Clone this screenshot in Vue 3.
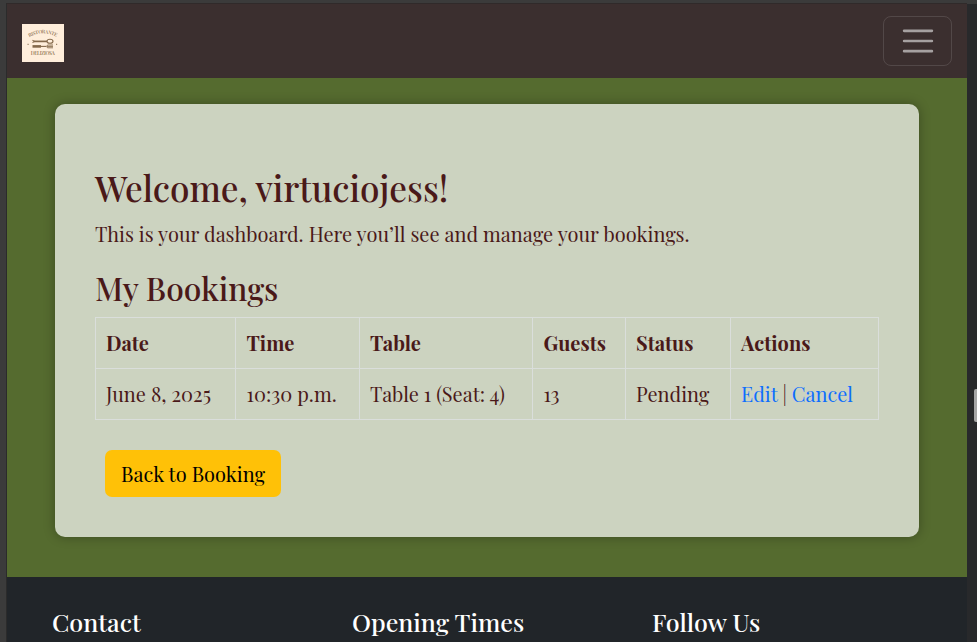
<script setup>
const columns = ['Date', 'Time', 'Table', 'Guests', 'Status', 'Actions']
const booking = ['June 8, 2025', '10:30 p.m.', 'Table 1 (Seat: 4)', '13', 'Pending']
const footer = ['Contact', 'Opening Times', 'Follow Us']
</script>

<template>
  <div class="frame">
    <div class="page">
      <nav class="navbar">
        <svg class="logo" viewBox="0 0 42 38" width="42" height="38">
          <rect width="42" height="38" fill="#ffeedb" />
          <path id="logo-arc" d="M7.2 13.4 Q20.8 5.4 35 13.4" fill="none" />
          <text class="logo-text"><textPath href="#logo-arc" textLength="28.5">RISTORANTE</textPath></text>
          <g fill="none" stroke="#84694b" stroke-width="1.1">
            <path d="M12 17.4H25" stroke-width="1.7" />
            <path d="M10.5 16.2l2 1.2-2 1.2" />
            <ellipse cx="28" cy="17.2" rx="3" ry="2" />
            <path d="M10.5 22.4H19" stroke-width="2.6" />
            <path d="M19 22.4H24" />
            <path d="M31 21H25.5q-1.8 1.4 0 2.8H31M25 22.4H31" stroke-width=".9" />
          </g>
          <path d="M5.5 20.3h1.2M34 20.3h1.2" stroke="#84694b" />
          <text class="logo-text" x="8.8" y="31.4" textLength="24">DELIZIOSA</text>
        </svg>
        <button class="toggler" aria-label="Toggle navigation">
          <svg viewBox="0 0 30 30" width="38" height="38">
            <path d="M4 7h22M4 15h22M4 23h22" stroke="rgba(255,255,255,.55)" stroke-width="2" stroke-linecap="round" />
          </svg>
        </button>
      </nav>

      <main>
        <section class="card">
          <h1>Welcome, virtuciojess!</h1>
          <p>This is your dashboard. Here you’ll see and manage your bookings.</p>
          <h2>My Bookings</h2>
          <table>
            <colgroup>
              <col class="c-date" /><col class="c-time" /><col class="c-seat" />
              <col class="c-guests" /><col class="c-status" /><col />
            </colgroup>
            <thead>
              <tr><th v-for="c in columns" :key="c">{{ c }}</th></tr>
            </thead>
            <tbody>
              <tr>
                <td v-for="b in booking" :key="b">{{ b }}</td>
                <td><a>Edit</a> <span>|</span> <a>Cancel</a></td>
              </tr>
            </tbody>
          </table>
          <button class="back">Back to Booking</button>
        </section>
      </main>

      <footer>
        <h3 v-for="f in footer" :key="f">{{ f }}</h3>
      </footer>
    </div>
    <aside class="rail"><span class="thumb"></span></aside>
  </div>
</template>

<style>
body { overflow: hidden; background: #3a3a3a; }
</style>

<style scoped>
.frame {
  box-sizing: border-box;
  display: flex;
  width: 977px;
  height: 642px;
  padding: 3px 0 0 6px;
  overflow: hidden;
  background: #3b3b3b;
  font-family: "Playfair Display", "Liberation Serif", serif;
}
.page {
  box-sizing: border-box;
  display: flex;
  flex-direction: column;
  width: 961px;
  border-left: 1px solid #2b2b2b;
  border-top: 1px solid #302a2a;
}
.navbar {
  box-sizing: border-box;
  display: flex;
  flex: none;
  justify-content: space-between;
  align-items: flex-start;
  height: 74px;
  padding: 12px 15px 0;
  background: #3b2f2f;
}
.logo { display: block; margin-top: 8px; }
.logo-text { font-size: 5px; font-weight: 600; fill: #967b5c; }
.toggler {
  box-sizing: border-box;
  display: flex;
  justify-content: center;
  align-items: center;
  width: 69px;
  height: 50px;
  padding: 0;
  border: 1px solid rgba(255, 255, 255, .12);
  border-radius: 8px;
  background: none;
}
main {
  box-sizing: border-box;
  flex: none;
  height: 499px;
  padding: 26px 48px 40px;
  background: #556b2f;
}
.card {
  box-sizing: border-box;
  height: 433px;
  padding: 62px 40px 40px;
  border-radius: 10px;
  background: #ccd3c0;
  box-shadow: 0 0 12px rgba(0, 0, 0, .3);
  color: #4a1919;
}
h1, h2, h3, p { margin: 0; white-space: nowrap; }
h1, h2, h3 { font-weight: 500; }
h1 { font-size: 35.14px; line-height: 44px; }
p { margin-top: 9px; font-size: 20px; line-height: 30px; }
h2 { margin-top: 20px; font-size: 31.76px; line-height: 38px; }
table {
  width: 784px;
  margin-top: 10px;
  border-collapse: collapse;
  table-layout: fixed;
  font-size: 20px;
}
.c-date { width: 140px; }
.c-time { width: 124px; }
.c-seat { width: 173px; }
.c-guests { width: 93px; }
.c-status { width: 105px; }
th, td {
  box-sizing: border-box;
  height: 51px;
  padding: 0 10px;
  border: 1px solid #dadedb;
  line-height: 30px;
  text-align: left;
  white-space: nowrap;
}
th:nth-child(2), td:nth-child(2),
th:nth-child(4), td:nth-child(4) { padding-left: 10.5px; }
a { color: #0d6efd; }
.back {
  display: block;
  width: 176px;
  height: 47px;
  margin: 30px 0 0 10px;
  padding: 0 0 1px;
  border: 0;
  border-radius: 7px;
  background: #ffc107;
  color: #000;
  font-family: inherit;
  font-size: 20px;
}
footer {
  display: grid;
  grid-template-columns: repeat(3, 300px);
  flex: 1;
  padding: 30px 0 0 45px;
  background: #212529;
  color: #fff;
}
h3 { font-size: 25px; line-height: 30px; }
.rail {
  display: flex;
  justify-content: flex-end;
  width: 10px;
  margin-top: 1px;
  background: #28292b;
}
.thumb { width: 3px; height: 33px; margin-top: 385px; background: #a5a5a5; border-radius: 2px 0 0 2px; }
</style>
